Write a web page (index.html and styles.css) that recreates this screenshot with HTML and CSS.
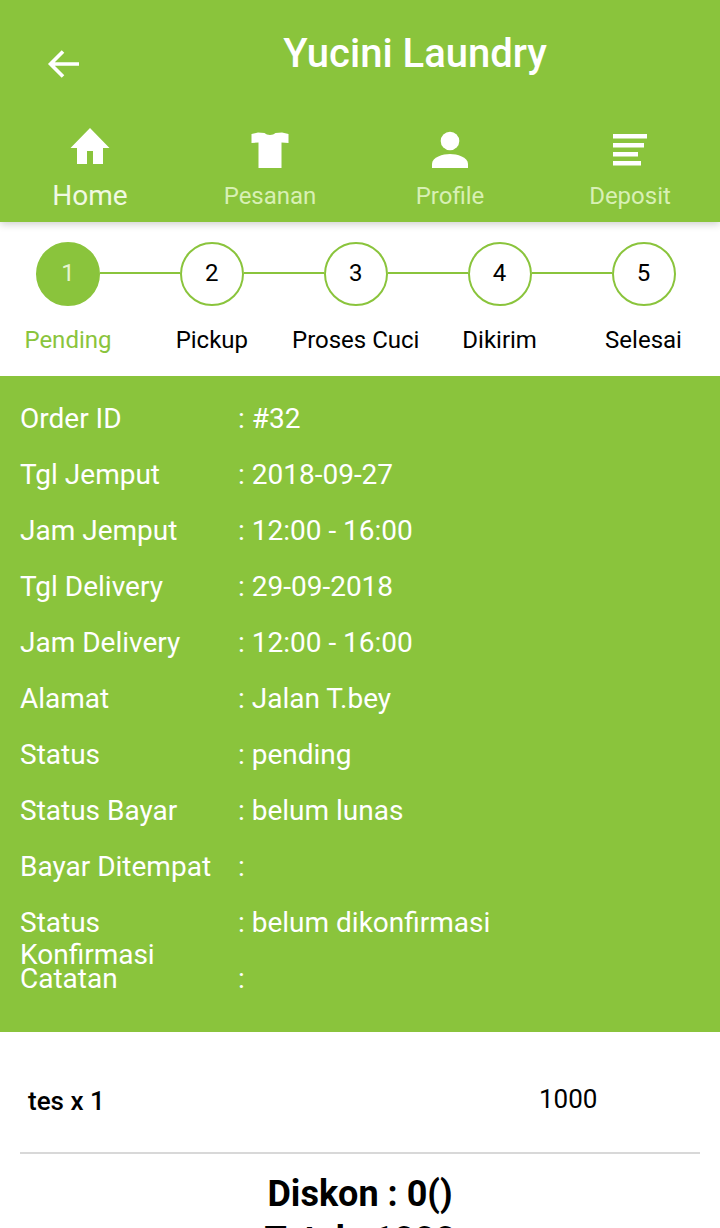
FILE: index.html
```html
<!DOCTYPE html>
<html>
<head>
    <title>Yucini Laundry</title>
    <link rel="stylesheet" href="styles.css">
</head>
<body>
    <header class="top">
        <div class="top-bar">
            <svg class="back" width="40" height="40" viewBox="0 0 40 40">
                <path d="M35 20H7M19 7.500L6.500 20 19 32.500" fill="none" stroke="#fff" stroke-width="3.600"/>
            </svg>
            <h1 class="title">Yucini Laundry</h1>
        </div>
        <nav class="tabs">
            <a class="tab active">
                <svg width="40" height="40" viewBox="0 0 40 40"><path d="M20 0L39.500 20H33V36H23V23H17V36H7V20H0.500Z" fill="#fff"/></svg>
                <span>Home</span>
            </a>
            <a class="tab">
                <svg width="40" height="40" viewBox="0 0 40 40"><path d="M8 4.500L14.500 5C17 7.500 23 7.500 25.500 5L32 4.500L38.500 6V15L31.500 14.500V40H8.500V14.500L1.500 15V6Z" fill="#fff"/></svg>
                <span>Pesanan</span>
            </a>
            <a class="tab">
                <svg width="40" height="40" viewBox="0 0 40 40"><circle cx="20" cy="13" r="9.300" fill="#fff"/><path d="M2 40V36C2 29 13 26 20 26S38 29 38 36V40Z" fill="#fff"/></svg>
                <span>Profile</span>
            </a>
            <a class="tab">
                <svg width="40" height="40" viewBox="0 0 40 40"><path d="M3 6H37V10.500H3ZM3 15H34V19.500H3ZM3 24H28V28.500H3ZM3 33H31V37.500H3Z" fill="#fff"/></svg>
                <span>Deposit</span>
            </a>
        </nav>
    </header>

    <section class="steps">
        <div class="step done"><div class="circle">1</div><div class="step-name">Pending</div></div>
        <div class="step"><div class="circle">2</div><div class="step-name">Pickup</div></div>
        <div class="step"><div class="circle">3</div><div class="step-name">Proses Cuci</div></div>
        <div class="step"><div class="circle">4</div><div class="step-name">Dikirim</div></div>
        <div class="step"><div class="circle">5</div><div class="step-name">Selesai</div></div>
    </section>

    <section class="detail">
        <div class="row"><div class="label">Order ID</div><div class="value">: #32</div></div>
        <div class="row"><div class="label">Tgl Jemput</div><div class="value">: 2018-09-27</div></div>
        <div class="row"><div class="label">Jam Jemput</div><div class="value">: 12:00 - 16:00</div></div>
        <div class="row"><div class="label">Tgl Delivery</div><div class="value">: 29-09-2018</div></div>
        <div class="row"><div class="label">Jam Delivery</div><div class="value">: 12:00 - 16:00</div></div>
        <div class="row"><div class="label">Alamat</div><div class="value">: Jalan T.bey</div></div>
        <div class="row"><div class="label">Status</div><div class="value">: pending</div></div>
        <div class="row"><div class="label">Status Bayar</div><div class="value">: belum lunas</div></div>
        <div class="row"><div class="label">Bayar Ditempat</div><div class="value">:</div></div>
        <div class="row"><div class="label">Status Konfirmasi</div><div class="value">: belum dikonfirmasi</div></div>
        <div class="row"><div class="label">Catatan</div><div class="value">:</div></div>
    </section>

    <section class="items">
        <div class="item">
            <div class="item-name">tes x 1</div>
            <div class="item-price">1000</div>
        </div>
        <hr class="line">
        <div class="sum">Diskon : 0()</div>
        <div class="sum">Total : 1000</div>
    </section>
</body>
</html>
```

FILE: styles.css
```css
* {
    box-sizing: border-box;
    margin: 0;
}

html, body {
    height: 1228px;
    overflow: hidden;
}

body {
    background: #fff;
    font-family: Roboto, "Liberation Sans", sans-serif;
    color: #000;
}

.top {
    position: relative;
    height: 222px;
    background: #8ac43c;
    box-shadow: 0 2px 8px rgba(0, 0, 0, 0.2);
}

.top-bar {
    display: flex;
    height: 124px;
    padding: 44px 0 0 44px;
}

.back {
    flex: none;
}

.title {
    flex: 1;
    margin-top: -26px;
    padding-left: 26px;
    text-align: center;
    font-size: 40px;
    line-height: 72px;
    font-weight: 500;
    color: #fff;
}

.tabs {
    display: grid;
    grid-template-columns: repeat(4, 1fr);
}

.tab {
    display: flex;
    flex-direction: column;
    align-items: center;
    height: 98px;
    padding-top: 4px;
    font-size: 24px;
    color: #d8f0b4;
}

.tab span {
    margin-top: 8px;
    line-height: 40px;
}

.tab.active {
    font-size: 28px;
    color: #f0f9e2;
}

.steps {
    display: grid;
    grid-template-columns: repeat(5, 143.900px);
    height: 154px;
    margin-left: -4px;
    padding-top: 20px;
}

.step {
    position: relative;
    display: flex;
    flex-direction: column;
    align-items: center;
}

.step + .step::before {
    content: "";
    position: absolute;
    top: 30px;
    left: -40px;
    width: 80px;
    height: 2px;
    background: #8ac43c;
}

.circle {
    width: 64px;
    height: 64px;
    border: 2px solid #8ac43c;
    border-radius: 50%;
    background: #fff;
    font-size: 24px;
    line-height: 59px;
    text-align: center;
}

.step-name {
    margin-top: 16px;
    font-size: 24px;
    line-height: 36px;
    white-space: nowrap;
}

.done .circle {
    background: #8ac43c;
    color: #e6f5cf;
}

.done .step-name {
    color: #8ac43c;
}

.detail {
    height: 656px;
    padding: 27px 20px 0;
    background: #8ac43c;
    color: #fff;
    font-size: 28px;
    line-height: 32px;
}

.row {
    display: flex;
    height: 56px;
}

.label {
    flex: none;
    width: 218px;
    padding-right: 4px;
}

.items {
    padding: 0 20px;
}

.item {
    display: flex;
    height: 120px;
    padding: 51px 8px 0;
    font-size: 26px;
    line-height: 36px;
}

.item-name {
    width: 511px;
    font-weight: 500;
}

.item-price {
    margin-top: -2px;
}

.line {
    height: 2px;
    border: 0;
    background: #d8d8d8;
}

.sum {
    font-size: 36px;
    font-weight: 700;
    line-height: 40px;
    text-align: center;
}

.line + .sum {
    margin-top: 20px;
}

.sum + .sum {
    margin-top: 6px;
}
```
